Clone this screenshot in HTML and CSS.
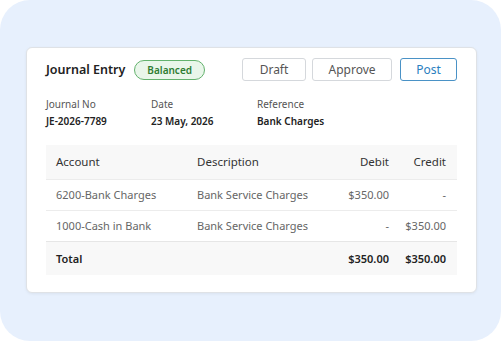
FILE: index.html
```html
<!DOCTYPE html>
<html>
<head>
<meta charset="utf-8">
<link rel="stylesheet" href="styles.css">
</head>
<body>
<div class="bg">
  <div class="card">
    <div class="head">
      <div class="title-wrap">
        <span class="title">Journal Entry</span>
        <span class="badge">Balanced</span>
      </div>
      <div class="actions">
        <button class="btn draft">Draft</button>
        <button class="btn approve">Approve</button>
        <button class="btn post">Post</button>
      </div>
    </div>
    <div class="meta">
      <div class="meta-item m1"><div class="label">Journal No</div><div class="value">JE-2026-7789</div></div>
      <div class="meta-item m2"><div class="label">Date</div><div class="value">23 May, 2026</div></div>
      <div class="meta-item m3"><div class="label">Reference</div><div class="value">Bank Charges</div></div>
    </div>
    <table class="tbl">
      <thead>
        <tr><th class="c-acc">Account</th><th class="c-desc">Description</th><th class="c-deb num">Debit</th><th class="c-cred num">Credit</th></tr>
      </thead>
      <tbody>
        <tr><td>6200-Bank Charges</td><td>Bank Service Charges</td><td class="num">$350.00</td><td class="num">-</td></tr>
        <tr><td>1000-Cash in Bank</td><td>Bank Service Charges</td><td class="num">-</td><td class="num">$350.00</td></tr>
      </tbody>
      <tfoot>
        <tr><td>Total</td><td></td><td class="num">$350.00</td><td class="num">$350.00</td></tr>
      </tfoot>
    </table>
  </div>
</div>
</body>
</html>
```
FILE: styles.css
```css
* { box-sizing: border-box; }
html, body { margin: 0; padding: 0; background: #fff; }
body { font-family: "Noto Sans", "Open Sans", sans-serif; color: #333; }
.bg {
  width: 501px; height: 341px;
  background: #e7f0fd;
  border-radius: 30px;
  padding: 47px 24px 0 26px;
}
.card {
  width: 451px; height: 246px;
  background: #fff;
  border: 1px solid #dfe2e6;
  border-radius: 6px;
  box-shadow: 0 1px 3px rgba(0,0,0,0.06);
  padding: 10px 19px 0 19px;
}
.head { display: flex; justify-content: space-between; align-items: center; height: 23px; }
.title-wrap { display: flex; align-items: center; gap: 9px; }
.title { font-size: 12.5px; font-weight: 600; color: #222; }
.badge {
  font-size: 10px; font-weight: 600; color: #2e7d32;
  background: #e9f6ea; border: 1px solid #63b26d;
  border-radius: 11px; padding: 2px 12px; line-height: 14px;
}
.actions { display: flex; gap: 6px; }
.btn {
  font-family: inherit; font-size: 12px; color: #555;
  background: #fff; border: 1px solid #d5d8dc; border-radius: 3px;
  height: 23px; padding: 0; line-height: 21px;
}
.draft { width: 64px; }
.approve { width: 80px; margin-right: 2px; }
.post { width: 57px; color: #2b7fc0; border-color: #4a92c6; }
.meta { display: flex; margin-top: 17px; }
.meta-item { display: flex; flex-direction: column; gap: 3px; }
.m1 { width: 105px; }
.m2 { width: 106px; }
.label { font-size: 10px; color: #555; line-height: 13px; }
.value { font-size: 10px; font-weight: 600; color: #222; line-height: 14px; }
.tbl {
  margin-top: 17px; width: 411px; border-collapse: collapse;
  table-layout: fixed; font-size: 11px;
}
.tbl th, .tbl td { text-align: left; padding: 0 10px; white-space: nowrap; }
.tbl th { font-weight: 400; color: #333; height: 34px; background: #f8f8f8; font-size: 11.5px; }
.tbl tbody td { color: #666; height: 31px; border-top: 1px solid #ececec; }
.tbl tfoot td { font-weight: 600; color: #222; height: 34px; background: #f8f8f8; border-top: 1px solid #e6e6e6; }
.tbl .num { text-align: right; padding-left: 0; }
.tbl .c-cred, .tbl td:last-child { padding-right: 11px; }
.c-acc { width: 141px; }
.c-desc { width: 142px; }
.c-deb { width: 70px; }
.c-cred { width: 58px; }
```
